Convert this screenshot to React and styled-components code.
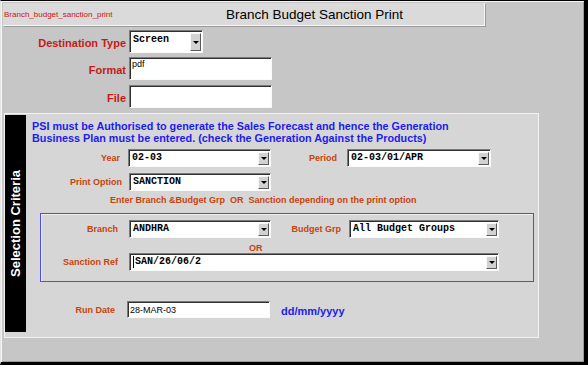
import styled, { createGlobalStyle } from "styled-components";

const GlobalStyle = createGlobalStyle`
  html, body {
    margin: 0;
    padding: 0;
    background: #c6c6c6;
  }
  body {
    font-family: "Liberation Sans", Arial, sans-serif;
  }
`;

const Window = styled.div`
  width: 588px;
  height: 365px;
  box-sizing: border-box;
  background: #c6c6c6;
  border-top: 1px solid #000;
  border-left: 1px solid #e6e6e6;
  border-right: 4px solid #000;
  border-bottom: 3px solid #000;
  box-shadow: inset 1px 1px 0 #f4f4f4, inset -1px -1px 0 #9a9a9a;
  display: flex;
  flex-direction: column;
  overflow: hidden;
`;

const TitleBar = styled.div`
  margin: 2px 0 0 2px;
  width: 482px;
  height: 23px;
  box-sizing: border-box;
  background: #dadada;
  border-right: 1px solid #f6f6f6;
  border-bottom: 1px solid #f6f6f6;
  box-shadow: 1px 1px 0 #9c9c9c;
  display: flex;
  align-items: center;
`;

const FormName = styled.span`
  flex: 0 0 222px;
  padding-left: 1px;
  font-size: 8px;
  color: #c81414;
`;

const Title = styled.span`
  font-size: 13.5px;
  color: #000;
`;

const TopForm = styled.div`
  display: flex;
  flex-direction: column;
  padding-top: 4px;
`;

const TopRow = styled.div`
  display: flex;
  align-items: center;
  margin-top: ${(p) => p.$mt || 0}px;
`;

const TopLabel = styled.span`
  flex: 0 0 125px;
  margin-right: 3px;
  padding-top: 2px;
  text-align: right;
  font-size: 11px;
  font-weight: bold;
  color: #c41a1a;
`;

const TextBox = styled.div`
  width: ${(p) => p.$w}px;
  height: ${(p) => p.$h}px;
  box-sizing: border-box;
  background: #fff;
  border-top: 1px solid #7a7a7a;
  border-left: 1px solid #7a7a7a;
  border-bottom: 1px solid #fafafa;
  border-right: 1px solid #fafafa;
  box-shadow: inset 1px 1px 0 #303030;
  display: flex;
  align-items: ${(p) => (p.$top ? "flex-start" : "center")};
  padding: ${(p) => (p.$top ? "1px 0 0 2px" : "0 0 0 2px")};
  font-size: 9px;
  color: #000;
`;

const Combo = styled.div`
  width: ${(p) => p.$w}px;
  height: ${(p) => p.$h || 18}px;
  box-sizing: border-box;
  display: flex;
  background: #fff;
  border-top: 1px solid #7a7a7a;
  border-left: 1px solid #7a7a7a;
  border-bottom: 1px solid #fafafa;
  border-right: 1px solid #fafafa;
  box-shadow: inset 1px 1px 0 #303030;
`;

const ComboText = styled.span`
  flex: 1;
  display: flex;
  align-items: flex-start;
  padding: ${(p) => (p.$tall ? "3px" : "2px")} 0 0 3px;
  font-family: "Liberation Mono", "Courier New", monospace;
  font-weight: bold;
  font-size: 10px;
  line-height: 12px;
  color: #000;
  white-space: pre;
  overflow: hidden;
`;

const Caret = styled.span`
  width: 1px;
  height: 12px;
  margin-right: 1px;
  background: #000;
`;

const ComboButton = styled.span`
  flex: 0 0 11px;
  box-sizing: border-box;
  margin: 2px 1px 1px 0;
  background: #d2d2d2;
  border-top: 1px solid #f8f8f8;
  border-left: 1px solid #f8f8f8;
  border-right: 1px solid #5a5a5a;
  border-bottom: 1px solid #5a5a5a;
  display: flex;
  justify-content: center;
  align-items: center;

  &::after {
    content: "";
    width: 0;
    height: 0;
    border-left: 3px solid transparent;
    border-right: 3px solid transparent;
    border-top: 3px solid #000;
  }
`;

const Panel = styled.section`
  margin: 5px 0 0 3px;
  width: 535px;
  height: 225px;
  box-sizing: border-box;
  border: 1px solid #f2f2f2;
  background: #d6d6d6;
  display: flex;
`;

const Strip = styled.div`
  flex: 0 0 21px;
  height: 217px;
  margin-top: 1px;
  background: #000;
  display: flex;
  align-items: center;
  justify-content: center;
`;

const StripText = styled.span`
  writing-mode: vertical-rl;
  transform: rotate(180deg);
  color: #fff;
  font-size: 13px;
  font-weight: bold;
  white-space: nowrap;
`;

const Content = styled.div`
  flex: 1;
  display: flex;
  flex-direction: column;
  padding-top: 6px;
`;

const Note = styled.p`
  margin: 0 0 0 6px;
  font-size: 10.8px;
  font-weight: bold;
  line-height: 12px;
  color: #1c1cf0;
  white-space: nowrap;
`;

const Row = styled.div`
  display: flex;
  align-items: center;
  margin-top: ${(p) => p.$mt || 0}px;
`;

const Label = styled.span`
  flex: 0 0 ${(p) => p.$w}px;
  margin-right: ${(p) => p.$gap}px;
  text-align: right;
  font-size: 9px;
  font-weight: bold;
  color: #c8420c;
`;

const Hint = styled.div`
  margin-top: 3px;
  padding-left: 84px;
  font-size: 9px;
  font-weight: bold;
  line-height: 12px;
  color: #c8420c;
  white-space: pre;
`;

const GroupBox = styled.div`
  margin: 7px 0 0 14px;
  width: 494px;
  height: 69px;
  box-sizing: border-box;
  border: 1px solid #4a4af6;
  box-shadow: inset 1px 1px 0 #f0f0f0;
  padding-top: 6px;
  display: flex;
  flex-direction: column;
`;

const OrText = styled.div`
  margin-top: 5px;
  padding-left: 208px;
  font-size: 9px;
  font-weight: bold;
  line-height: 10px;
  color: #c8420c;
`;

const DateHint = styled.span`
  margin-left: 11px;
  padding-top: 3px;
  font-size: 11px;
  font-weight: bold;
  color: #1c1cf0;
`;

const Select = ({ w, h, value, caret }) => (
  <Combo $w={w} $h={h}>
    <ComboText $tall={h > 18}>
      {caret && <Caret />}
      {value}
    </ComboText>
    <ComboButton />
  </Combo>
);

export default function App() {
  return (
    <>
      <GlobalStyle />
      <Window>
        <TitleBar>
          <FormName>Branch_budget_sanction_print</FormName>
          <Title>Branch Budget Sanction Print</Title>
        </TitleBar>

        <TopForm>
          <TopRow>
            <TopLabel>Destination Type</TopLabel>
            <Select w={74} h={23} value="Screen" />
          </TopRow>
          <TopRow $mt={4}>
            <TopLabel>Format</TopLabel>
            <TextBox $w={143} $h={23} $top>
              pdf
            </TextBox>
          </TopRow>
          <TopRow $mt={5}>
            <TopLabel>File</TopLabel>
            <TextBox $w={143} $h={23} />
          </TopRow>
        </TopForm>

        <Panel>
          <Strip>
            <StripText>Selection Criteria</StripText>
          </Strip>
          <Content>
            <Note>
              PSI must be Authorised to generate the Sales Forecast and hence the Generation
              <br />
              Business Plan must be entered. (check the Generation Against the Products)
            </Note>

            <Row $mt={5}>
              <Label $w={94} $gap={8}>Year</Label>
              <Select w={143} value="02-03" />
              <Label $w={66} $gap={10}>Period</Label>
              <Select w={144} value="02-03/01/APR" />
            </Row>

            <Row $mt={6}>
              <Label $w={96} $gap={7}>Print Option</Label>
              <Select w={142} value="SANCTION" />
            </Row>

            <Hint>Enter Branch &amp;Budget Grp  OR  Sanction depending on the print option</Hint>

            <GroupBox>
              <Row>
                <Label $w={77} $gap={11}>Branch</Label>
                <Select w={142} value="ANDHRA" />
                <Label $w={70} $gap={8}>Budget Grp</Label>
                <Select w={150} value="All Budget Groups" />
              </Row>
              <OrText>OR</OrText>
              <Row>
                <Label $w={77} $gap={11}>Sanction Ref</Label>
                <Select w={370} value="SAN/26/06/2" caret />
              </Row>
            </GroupBox>

            <Row $mt={19}>
              <Label $w={89} $gap={12}>Run Date</Label>
              <TextBox $w={143} $h={17}>
                28-MAR-03
              </TextBox>
              <DateHint>dd/mm/yyyy</DateHint>
            </Row>
          </Content>
        </Panel>
      </Window>
    </>
  );
}
